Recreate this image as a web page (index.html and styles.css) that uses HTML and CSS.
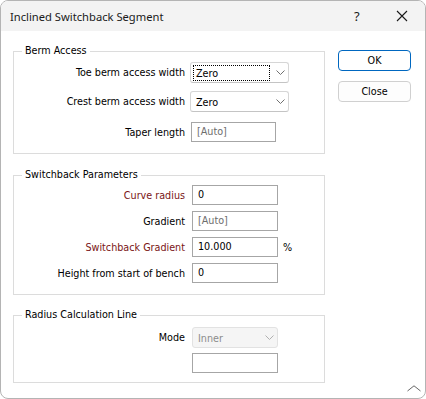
FILE: index.html
```html
<!DOCTYPE html>
<html>
<head>
<meta charset="utf-8">
<link rel="stylesheet" href="styles.css">
</head>
<body>
<div class="window">
  <div class="titlebar">
    <span class="title">Inclined Switchback Segment</span>
    <span class="help">?</span>
    <svg class="close-x" width="12" height="12" viewBox="0 0 12 12"><path d="M1 1 L11 11 M11 1 L1 11" stroke="#1a1a1a" stroke-width="1.1" fill="none"/></svg>
  </div>
  <div class="main">
    <div class="groups">
      <fieldset class="group g1">
        <legend>Berm Access</legend>
        <div class="row r-combo first">
          <span class="lbl">Toe berm access width</span>
          <div class="combo w99"><span class="val focus">Zero</span><svg class="chev" width="9" height="5" viewBox="0 0 9 5"><path d="M0.5 0.5 L4.5 4.5 L8.5 0.5" stroke="#707070" fill="none"/></svg></div>
        </div>
        <div class="row r-combo gap8">
          <span class="lbl">Crest berm access width</span>
          <div class="combo w99"><span class="val">Zero</span><svg class="chev" width="9" height="5" viewBox="0 0 9 5"><path d="M0.5 0.5 L4.5 4.5 L8.5 0.5" stroke="#707070" fill="none"/></svg></div>
        </div>
        <div class="row r-input gap10">
          <span class="lbl">Taper length</span>
          <div class="input w85 shift1 dim">[Auto]</div>
        </div>
      </fieldset>
      <fieldset class="group g2">
        <legend>Switchback Parameters</legend>
        <div class="row r-input first2">
          <span class="lbl red">Curve radius</span>
          <div class="input w86 shift2">0</div>
        </div>
        <div class="row r-input gap6">
          <span class="lbl">Gradient</span>
          <div class="input w86 shift2 dim">[Auto]</div>
        </div>
        <div class="row r-input gap6">
          <span class="lbl red">Switchback Gradient</span>
          <div class="input w86 shift2">10.000</div>
          <span class="unit">%</span>
        </div>
        <div class="row r-input gap6">
          <span class="lbl">Height from start of bench</span>
          <div class="input w86 shift2">0</div>
        </div>
      </fieldset>
      <fieldset class="group g3">
        <legend>Radius Calculation Line</legend>
        <div class="row r-combo first3">
          <span class="lbl">Mode</span>
          <div class="combo disabled w86 shift2"><span class="val">Inner</span><svg class="chev" width="9" height="5" viewBox="0 0 9 5"><path d="M0.5 0.5 L4.5 4.5 L8.5 0.5" stroke="#b0b0b0" fill="none"/></svg></div>
        </div>
        <div class="row r-input gap5">
          <span class="lbl"></span>
          <div class="input w86 shift2"></div>
        </div>
      </fieldset>
    </div>
    <div class="buttons">
      <div class="btn ok">OK</div>
      <div class="btn">Close</div>
    </div>
  </div>
  <div class="footer">
    <svg class="grip" width="14" height="7" viewBox="0 0 14 7"><path d="M0.5 6 L7 0.8 L13.5 6" stroke="#666" fill="none"/></svg>
  </div>
</div>
</body>
</html>
```
FILE: styles.css
```css
html, body {
  margin: 0;
  padding: 0;
  background: #ffffff;
}
.window {
  box-sizing: border-box;
  width: 426px;
  height: 399px;
  border: 1px solid #b4b4b4;
  border-radius: 8px;
  overflow: hidden;
  background: #ffffff;
  display: flex;
  flex-direction: column;
  font-family: "DejaVu Sans Condensed", "DejaVu Sans", sans-serif;
  font-stretch: condensed;
  font-size: 10.7px;
  color: #000;
}
.titlebar {
  height: 30px;
  background: #f3f3f3;
  display: flex;
  align-items: center;
  font-family: "Noto Sans", "Open Sans", sans-serif;
  font-stretch: normal;
  font-size: 11.2px;
  color: #1a1a1a;
}
.title {
  margin-left: 9px;
  flex: 1;
}
.help {
  width: 10px;
  margin-right: 32px;
  font-size: 13px;
}
.close-x {
  margin-right: 17px;
}
.main {
  display: flex;
  padding-left: 12px;
  height: 352px;
}
.groups {
  width: 312px;
  display: flex;
  flex-direction: column;
}
.group {
  margin: 0;
  padding: 0;
  border: 1px solid #dcdcdc;
  min-width: 0;
}
.group legend {
  margin-left: 8px;
  padding: 0 3px;
  height: 14px;
  line-height: 14px;
}
.g1 { margin-top: 13px; padding-bottom: 11px; }
.g2 { margin-top: 14px; padding-bottom: 11px; }
.g3 { margin-top: 13px; padding-bottom: 9px; }
.row {
  display: flex;
  align-items: center;
}
.r-combo { height: 21px; }
.r-input { height: 20px; }
.first { margin-top: 4px; }
.first2 { margin-top: 3px; }
.first3 { margin-top: 5px; }
.gap5 { margin-top: 5px; }
.gap6 { margin-top: 6px; }
.gap8 { margin-top: 8px; }
.gap10 { margin-top: 10px; }
.lbl {
  width: 171px;
  text-align: right;
  margin-right: 5px;
  white-space: nowrap;
}
.red { color: #7a1515; }
.shift1 { margin-left: 1px; }
.shift2 { margin-left: 2px; }
.combo {
  box-sizing: border-box;
  height: 21px;
  border: 1px solid #d6d6d6;
  border-bottom-color: #c4c4c4;
  border-radius: 3px;
  display: flex;
  align-items: center;
  padding: 0 0 0 2px;
  background: #fff;
}
.combo .val {
  box-sizing: border-box;
  padding: 0 2px;
  height: 16px;
  line-height: 15px;
  width: 77px;
  border: 1px solid transparent;
}
.combo .chev {
  margin-left: 6px;
}
.combo.disabled .val { width: 64px; }
.combo .val.focus {
  border: 1px dotted #000;
}
.combo.disabled {
  background: #f5f5f5;
  border-color: #e2e2e2;
  color: #8c8c8c;
}
.w99 { width: 99px; }
.w85 { width: 85px; }
.w86 { width: 86px; }
.input {
  box-sizing: border-box;
  height: 20px;
  border: 1px solid #a6a6a6;
  padding: 0 5px;
  line-height: 18px;
  background: #fff;
}
.input.dim { color: #6d6d6d; }
.unit {
  margin-left: 5px;
}
.buttons {
  margin-left: 13px;
  padding-top: 19px;
  display: flex;
  flex-direction: column;
  gap: 10px;
}
.btn {
  box-sizing: border-box;
  width: 73px;
  height: 21px;
  border: 1px solid #d0d0d0;
  border-radius: 4px;
  background: #fdfdfd;
  text-align: center;
  line-height: 19px;
}
.btn.ok {
  border-color: #0067c0;
  background: #ffffff;
}
.footer {
  display: flex;
  justify-content: flex-end;
  padding-right: 4px;
}
.grip {
  margin-top: 2px;
}
```
